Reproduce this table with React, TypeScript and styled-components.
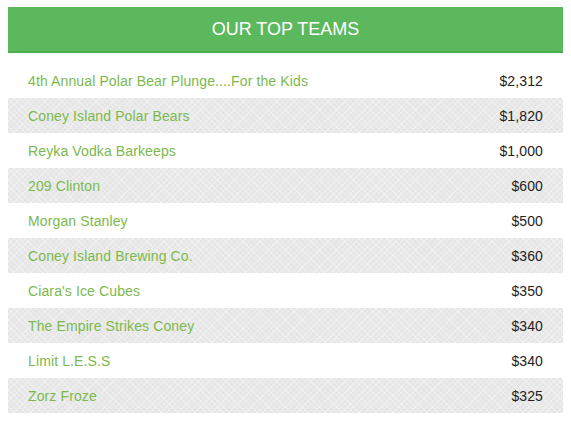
import React from "react";
import styled, { createGlobalStyle } from "styled-components";

const GlobalStyle = createGlobalStyle`
  body {
    margin: 0;
    background: #fff;
    font-family: "Liberation Sans", Arial, sans-serif;
  }
`;

const Wrapper = styled.div`
  padding: 7px 8px 0 8px;
`;

const Header = styled.h2`
  margin: 0;
  height: 44px;
  line-height: 44px;
  background: #5cb85c;
  border-bottom: 2px solid #4cae4c;
  color: #fff;
  font-size: 18px;
  font-weight: normal;
  text-align: center;
`;

const List = styled.ul`
  list-style: none;
  margin: 10px 0 0 0;
  padding: 0;
`;

const Row = styled.li<{ $striped: boolean }>`
  display: flex;
  justify-content: space-between;
  align-items: center;
  height: 35px;
  padding: 0 20px;
  font-size: 14px;
  letter-spacing: 0.12px;
  background-color: ${(p) => (p.$striped ? "#e6e6e6" : "#fff")};
  background-image: ${(p) =>
    p.$striped
      ? `repeating-linear-gradient(45deg, rgba(255,255,255,0.3) 0 1px, transparent 1px 4px),
         repeating-linear-gradient(-45deg, rgba(255,255,255,0.3) 0 1px, transparent 1px 4px)`
      : "none"};
`;

const TeamName = styled.span`
  color: #7cb94c;
`;

const Amount = styled.span`
  color: #222;
`;

const teams = [
  { name: "4th Annual Polar Bear Plunge....For the Kids", amount: "$2,312" },
  { name: "Coney Island Polar Bears", amount: "$1,820" },
  { name: "Reyka Vodka Barkeeps", amount: "$1,000" },
  { name: "209 Clinton", amount: "$600" },
  { name: "Morgan Stanley", amount: "$500" },
  { name: "Coney Island Brewing Co.", amount: "$360" },
  { name: "Ciara's Ice Cubes", amount: "$350" },
  { name: "The Empire Strikes Coney", amount: "$340" },
  { name: "Limit L.E.S.S", amount: "$340" },
  { name: "Zorz Froze", amount: "$325" },
];

export default function App() {
  return (
    <Wrapper>
      <GlobalStyle />
      <Header>OUR TOP TEAMS</Header>
      <List>
        {teams.map((t, i) => (
          <Row key={t.name} $striped={i % 2 === 1}>
            <TeamName>{t.name}</TeamName>
            <Amount>{t.amount}</Amount>
          </Row>
        ))}
      </List>
    </Wrapper>
  );
}
